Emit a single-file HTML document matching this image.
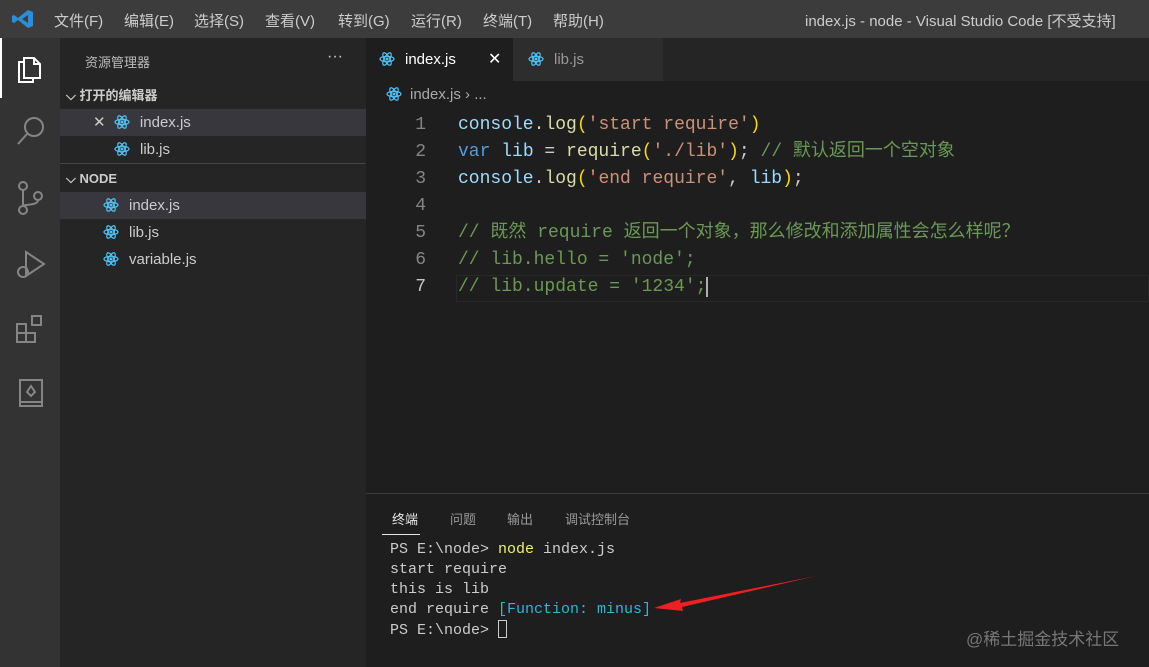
<!DOCTYPE html>
<html><head><meta charset="utf-8"><style>
*{margin:0;padding:0;box-sizing:border-box}
body{width:1149px;height:667px;overflow:hidden;background:#1e1e1e;font-family:"Liberation Sans","Noto Sans CJK SC",sans-serif;position:relative;color:#ccc}
.abs{position:absolute}
#title{left:0;top:0;width:1149px;height:38px;background:#3c3c3c;font-size:15px;color:#ccc}
#title span{position:absolute;top:10px}
#act{left:0;top:38px;width:60px;height:629px;background:#333}
#side{left:60px;top:38px;width:306px;height:629px;background:#252526;font-size:15px}
.row{position:absolute;left:0;width:306px;height:27px;line-height:27px}
.ic{display:inline-block;width:16px;height:16px;vertical-align:-3px;margin-right:10px}
#tabs{left:366px;top:38px;width:783px;height:43px;background:#252526}
.mono{font-family:"Liberation Mono","Noto Sans CJK SC",monospace}
.code{position:absolute;left:458px;font-size:18px;white-space:pre;height:27px;line-height:27px}
.ln{position:absolute;left:400px;width:26px;text-align:right;font-size:18px;color:#858585;line-height:27px;font-family:"Liberation Mono",monospace}
.term{position:absolute;left:390px;font-size:15px;white-space:pre;line-height:20px;color:#ccc}
.k{color:#9cdcfe}.s{color:#ce9178}.c{color:#6a9955}.y{color:#ffd700}.b{color:#569cd6}.f{color:#dcdcaa}
</style></head><body>
<svg width="0" height="0" style="position:absolute"><defs><g id="re"><ellipse cx="8" cy="8" rx="7" ry="2.7" fill="none" stroke="#4fc3f7" stroke-width="1.2"/><ellipse cx="8" cy="8" rx="7" ry="2.7" fill="none" stroke="#4fc3f7" stroke-width="1.2" transform="rotate(60 8 8)"/><ellipse cx="8" cy="8" rx="7" ry="2.7" fill="none" stroke="#4fc3f7" stroke-width="1.2" transform="rotate(-60 8 8)"/><circle cx="8" cy="8" r="1.5" fill="#4fc3f7"/></g></defs></svg>
<div id="title" class="abs">
<svg class="abs" style="left:12px;top:9px" width="22" height="20" viewBox="0 0 22 20"><path d="M16 1 L21 3 V17 L16 19 L6 11 L2 14 L0 13 V7 L2 6 L6 9 Z M16 6 L10 10 L16 14 Z" fill="#2a8fd8"/></svg>
<span style="left:54px">文件(F)</span><span style="left:124px">编辑(E)</span><span style="left:194px">选择(S)</span><span style="left:265px">查看(V)</span><span style="left:338px">转到(G)</span><span style="left:411px">运行(R)</span><span style="left:483px">终端(T)</span><span style="left:553px">帮助(H)</span>
<span style="left:805px">index.js - node - Visual Studio Code [不受支持]</span>
</div>
<div id="act" class="abs">
<div class="abs" style="left:0;top:0;width:2px;height:60px;background:#fff"></div>
<svg class="abs" style="left:14px;top:14px" width="32" height="32" viewBox="0 0 32 32" fill="none" stroke="#fff" stroke-width="2"><path d="M10 6h10l6 6v14h-16z"/><path d="M20 6v6h6"/><path d="M10 10H5v20h14v-4"/></svg>
<svg class="abs" style="left:15px;top:76px" width="32" height="34" viewBox="0 0 32 34" fill="none" stroke="#858585" stroke-width="2"><circle cx="19" cy="13" r="9"/><path d="M12 20L3 30"/></svg>
<svg class="abs" style="left:16px;top:142px" width="28" height="36" viewBox="0 0 28 36" fill="none" stroke="#858585" stroke-width="2"><circle cx="7" cy="6" r="4"/><circle cx="7" cy="30" r="4"/><circle cx="22" cy="16" r="4"/><path d="M7 10v16M22 20c0 6-15 4-15 6"/></svg>
<svg class="abs" style="left:14px;top:210px" width="34" height="34" viewBox="0 0 34 34" fill="none" stroke="#858585" stroke-width="2"><path d="M12 4l18 12-18 12z"/><circle cx="9" cy="24" r="5"/></svg>
<svg class="abs" style="left:14px;top:274px" width="34" height="34" viewBox="0 0 34 34" fill="none" stroke="#858585" stroke-width="2"><rect x="3" y="12" width="9" height="9"/><rect x="3" y="21" width="9" height="9"/><rect x="12" y="21" width="9" height="9"/><rect x="18" y="4" width="9" height="9"/></svg>
<svg class="abs" style="left:18px;top:340px" width="26" height="32" viewBox="0 0 26 32" fill="none" stroke="#858585" stroke-width="2"><rect x="2" y="2" width="22" height="26"/><path d="M2 24h22M13 8l-4 6 4 4 4-4z"/></svg>
</div>
<div id="side" class="abs">
<div class="abs" style="left:25px;top:14px;font-size:13px;color:#bbb">资源管理器</div>
<div class="abs" style="left:267px;top:10px;font-size:16px;color:#ccc">···</div>
<div class="row" style="top:44px;font-size:13px;font-weight:bold;color:#ccc;padding-left:6px">⌵ 打开的编辑器</div>
<div class="row" style="top:71px;background:#37373d;padding-left:33px"><span style="color:#ccc">✕</span>&nbsp;&nbsp;<svg class="ic"><use href="#re"/></svg>index.js</div>
<div class="row" style="top:98px;padding-left:54px"><svg class="ic"><use href="#re"/></svg>lib.js</div>
<div class="abs" style="left:0;top:125px;width:306px;height:1px;background:#444"></div>
<div class="row" style="top:127px;font-size:13px;font-weight:bold;color:#ccc;padding-left:6px">⌵ NODE</div>
<div class="row" style="top:154px;background:#37373d;padding-left:43px"><svg class="ic"><use href="#re"/></svg>index.js</div>
<div class="row" style="top:181px;padding-left:43px"><svg class="ic"><use href="#re"/></svg>lib.js</div>
<div class="row" style="top:208px;padding-left:43px"><svg class="ic"><use href="#re"/></svg>variable.js</div>
</div>
<div id="tabs" class="abs">
<div class="abs" style="left:0;top:0;width:147px;height:43px;background:#1e1e1e;line-height:43px;padding-left:13px;color:#fff;font-size:15px"><svg class="ic"><use href="#re"/></svg>index.js<span style="position:absolute;left:122px;font-size:16px">✕</span></div>
<div class="abs" style="left:147px;top:0;width:150px;height:43px;background:#2d2d2d;line-height:43px;padding-left:15px;color:#999;font-size:15px"><svg class="ic"><use href="#re"/></svg>lib.js</div>
</div>
<div class="abs" style="left:386px;top:86px;font-size:15px;color:#aaa"><svg class="ic" style="margin-right:8px"><use href="#re"/></svg>index.js › ...</div>
<div class="ln" style="top:112px">1</div><div class="ln" style="top:139px">2</div><div class="ln" style="top:166px">3</div><div class="ln" style="top:193px">4</div><div class="ln" style="top:220px">5</div><div class="ln" style="top:247px">6</div><div class="ln" style="top:274px;color:#c6c6c6">7</div>
<div class="abs" style="left:456px;top:275px;width:693px;height:27px;border:1px solid #282828"></div>
<div class="code mono" style="top:112px"><span class="k">console</span>.<span class="f">log</span><span class="y">(</span><span class="s">'start require'</span><span class="y">)</span></div>
<div class="code mono" style="top:139px"><span class="b">var</span> <span class="k">lib</span> = <span class="f">require</span><span class="y">(</span><span class="s">'./lib'</span><span class="y">)</span>; <span class="c">// 默认返回一个空对象</span></div>
<div class="code mono" style="top:166px"><span class="k">console</span>.<span class="f">log</span><span class="y">(</span><span class="s">'end require'</span>, <span class="k">lib</span><span class="y">)</span>;</div>
<div class="code mono c" style="top:220px">// 既然 require 返回一个对象，那么修改和添加属性会怎么样呢？</div>
<div class="code mono c" style="top:247px">// lib.hello = 'node';</div>
<div class="code mono c" style="top:274px">// lib.update = '1234';<span style="border-left:2px solid #aeafad"></span></div>
<div class="abs" style="left:366px;top:493px;width:783px;height:1px;background:#3c3c3c"></div>
<div class="abs" style="left:392px;top:509px;font-size:13px;color:#e7e7e7">终端</div>
<div class="abs" style="left:382px;top:534px;width:38px;height:1px;background:#e7e7e7"></div>
<div class="abs" style="left:450px;top:509px;font-size:13px;color:#999">问题</div>
<div class="abs" style="left:507px;top:509px;font-size:13px;color:#999">输出</div>
<div class="abs" style="left:565px;top:509px;font-size:13px;color:#999">调试控制台</div>
<div class="term mono" style="top:540px">PS E:\node&gt; <span style="color:#f0f060">node</span> index.js</div>
<div class="term mono" style="top:560px">start require</div>
<div class="term mono" style="top:580px">this is lib</div>
<div class="term mono" style="top:600px">end require <span style="color:#29b8db">[Function: minus]</span></div>
<div class="term mono" style="top:620px">PS E:\node&gt; <span style="display:inline-block;width:9px;height:18px;border:1px solid #ccc;vertical-align:-4px"></span></div>
<svg class="abs" style="left:650px;top:570px" width="170" height="50"><path d="M166 6 L30 33 L31 29 L4 38 L33 41 L32 37 Z" fill="#f02020"/></svg>
<div class="abs" style="left:966px;top:625px;font-size:17px;color:#777">@稀土掘金技术社区</div>
</body></html>
